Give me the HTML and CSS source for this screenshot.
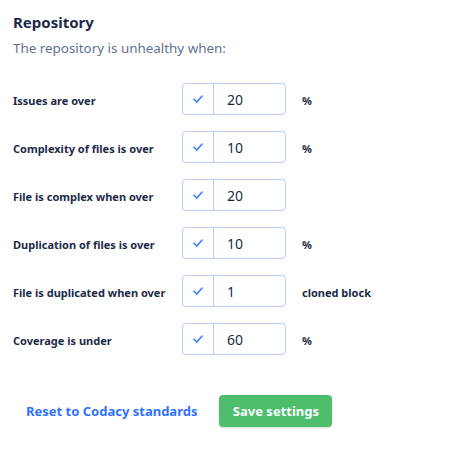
FILE: index.html
```html
<!DOCTYPE html>
<html>
<head>
<meta charset="utf-8">
<link rel="stylesheet" href="styles.css">
</head>
<body>
<div class="panel">
  <h2 class="title">Repository</h2>
  <p class="subtitle">The repository is unhealthy when:</p>
  <div class="rows">
    <div class="row">
      <span class="label">Issues are over</span>
      <div class="field"><span class="check"><svg width="10" height="8" viewBox="0 0 10 8"><path d="M1 4.2 L3.8 7 L9 1" fill="none" stroke="#3b7cf5" stroke-width="1.6" stroke-linecap="round" stroke-linejoin="round"/></svg></span><span class="value">20</span></div>
      <span class="unit">%</span>
    </div>
    <div class="row">
      <span class="label">Complexity of files is over</span>
      <div class="field"><span class="check"><svg width="10" height="8" viewBox="0 0 10 8"><path d="M1 4.2 L3.8 7 L9 1" fill="none" stroke="#3b7cf5" stroke-width="1.6" stroke-linecap="round" stroke-linejoin="round"/></svg></span><span class="value">10</span></div>
      <span class="unit">%</span>
    </div>
    <div class="row">
      <span class="label">File is complex when over</span>
      <div class="field"><span class="check"><svg width="10" height="8" viewBox="0 0 10 8"><path d="M1 4.2 L3.8 7 L9 1" fill="none" stroke="#3b7cf5" stroke-width="1.6" stroke-linecap="round" stroke-linejoin="round"/></svg></span><span class="value">20</span></div>
      <span class="unit"></span>
    </div>
    <div class="row">
      <span class="label">Duplication of files is over</span>
      <div class="field"><span class="check"><svg width="10" height="8" viewBox="0 0 10 8"><path d="M1 4.2 L3.8 7 L9 1" fill="none" stroke="#3b7cf5" stroke-width="1.6" stroke-linecap="round" stroke-linejoin="round"/></svg></span><span class="value">10</span></div>
      <span class="unit">%</span>
    </div>
    <div class="row">
      <span class="label">File is duplicated when over</span>
      <div class="field"><span class="check"><svg width="10" height="8" viewBox="0 0 10 8"><path d="M1 4.2 L3.8 7 L9 1" fill="none" stroke="#3b7cf5" stroke-width="1.6" stroke-linecap="round" stroke-linejoin="round"/></svg></span><span class="value">1</span></div>
      <span class="unit">cloned block</span>
    </div>
    <div class="row">
      <span class="label">Coverage is under</span>
      <div class="field"><span class="check"><svg width="10" height="8" viewBox="0 0 10 8"><path d="M1 4.2 L3.8 7 L9 1" fill="none" stroke="#3b7cf5" stroke-width="1.6" stroke-linecap="round" stroke-linejoin="round"/></svg></span><span class="value">60</span></div>
      <span class="unit">%</span>
    </div>
  </div>
  <div class="actions">
    <a class="reset" href="#">Reset to Codacy standards</a>
    <button class="save" type="button">Save settings</button>
  </div>
</div>
</body>
</html>
```

FILE: styles.css
```css
* { box-sizing: border-box; }
body {
  margin: 0;
  background: #ffffff;
  font-family: "Noto Sans", "DejaVu Sans", sans-serif;
  color: #1c2a48;
}
.panel {
  padding: 12px 13px;
}
.title {
  margin: 0;
  font-size: 15px;
  font-weight: 700;
  line-height: 20px;
  color: #1c2a48;
}
.subtitle {
  margin: 7px 0 0;
  font-size: 13.4px;
  line-height: 18px;
  color: #5f7090;
}
.rows {
  margin-top: 26px;
  display: flex;
  flex-direction: column;
  gap: 16px;
}
.row {
  display: flex;
  align-items: center;
  height: 32px;
}
.label {
  width: 169px;
  font-size: 11px;
  font-weight: 700;
  color: #1c2a48;
  padding-top: 2px;
}
.field {
  display: flex;
  width: 104px;
  height: 32px;
  border: 1px solid #b9cdf7;
  border-radius: 4px;
}
.check {
  width: 31px;
  display: flex;
  align-items: center;
  justify-content: center;
  border-right: 1px solid #b9cdf7;
}
.value {
  display: flex;
  align-items: center;
  padding-left: 13px;
  font-size: 14px;
  color: #1c2a48;
}
.unit {
  margin-left: 16px;
  font-size: 11px;
  font-weight: 700;
  color: #1c2a48;
  padding-top: 2px;
}
.actions {
  margin-top: 40px;
  display: flex;
  align-items: center;
  padding-left: 13px;
}
.reset {
  font-size: 13px;
  font-weight: 700;
  color: #2f72ff;
  text-decoration: none;
}
.save {
  margin-left: 22px;
  width: 113px;
  height: 32px;
  border: none;
  border-radius: 4px;
  background: #4cbe6c;
  color: #ffffff;
  font-family: inherit;
  font-size: 13px;
  font-weight: 700;
  box-shadow: 0 1px 2px rgba(0,0,0,0.15);
}
```
